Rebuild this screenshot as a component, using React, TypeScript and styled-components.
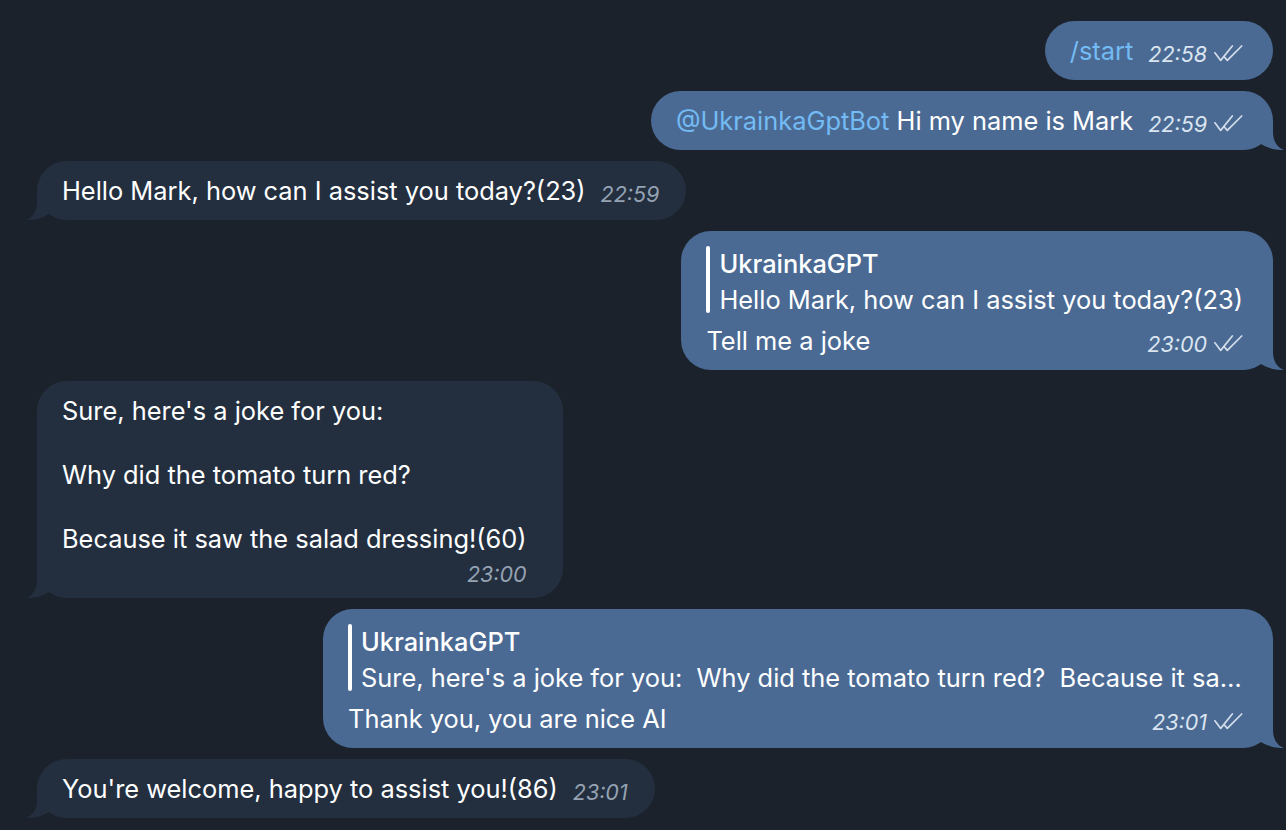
import React from "react";
import styled, { createGlobalStyle } from "styled-components";

const OUT_BG = "#4a6a94";
const IN_BG = "#232f3f";

const GlobalStyle = createGlobalStyle`
  html, body { margin: 0; padding: 0; background: #1b222c; }
  body { font-family: Inter, "Noto Sans", sans-serif; -webkit-font-smoothing: antialiased; }
`;

const Chat = styled.main`
  box-sizing: border-box;
  width: 1286px;
  height: 830px;
  overflow: hidden;
  display: flex;
  flex-direction: column;
  gap: 11px;
  padding: 21px 13px 0 37px;
  background: #1b222c;
`;

const Bubble = styled.div<{ $out?: boolean; $extra?: number }>`
  position: relative;
  box-sizing: border-box;
  align-self: ${(p) => (p.$out ? "flex-end" : "flex-start")};
  max-width: 950px;
  min-width: 0;
  background: ${(p) => (p.$out ? OUT_BG : IN_BG)};
  color: #ffffff;
  border-radius: 30px;
  padding: 14px ${(p) => (p.$out ? 30 : 27) + (p.$extra ?? 0)}px 13px 25px;
  font-size: 25.4px;
  line-height: 32px;
`;

const TailSvg = styled.svg<{ $out?: boolean }>`
  position: absolute;
  bottom: 0;
  width: 30px;
  height: 30px;
  ${(p) => (p.$out ? "right: -11px; transform: scaleX(-1);" : "left: -11px;")}
`;

const Tail: React.FC<{ out?: boolean }> = ({ out }) => (
  <TailSvg $out={out} viewBox="0 0 30 30" aria-hidden>
    <path
      d="M11 0 L11 12 C11 22 6 28 0 30 C8 30.2 15 29 24 23.6 L24 0 Z"
      fill={out ? OUT_BG : IN_BG}
    />
  </TailSvg>
);

const Row = styled.div`
  display: flex;
  align-items: baseline;
  justify-content: space-between;
  gap: 15px;
`;

const Text = styled.span`
  white-space: pre-wrap;
`;

const Link = styled.span`
  color: #74bbf4;
`;

const Meta = styled.span<{ $out?: boolean }>`
  display: inline-flex;
  align-items: baseline;
  gap: 7px;
  flex: none;
  font-size: 21.5px;
  line-height: 26px;
  font-style: italic;
  white-space: nowrap;
  transform: translateY(2px);
  color: ${(p) => (p.$out ? "#dbe5f0" : "#95a2b2")};
`;

const MetaBlock = styled.div`
  display: flex;
  justify-content: flex-end;
  margin-top: 4px;
`;

const ChecksSvg = styled.svg`
  width: 29px;
  height: 18px;
  margin-bottom: -2px;
`;

const Checks = () => (
  <ChecksSvg viewBox="0 0 29 18" aria-hidden>
    <g fill="none" stroke="#d3deea" strokeWidth="1.7" strokeLinecap="round" strokeLinejoin="round">
      <path d="M0.9 8.8 L6.7 16.4 L18.3 2" />
      <path d="M10.4 13 L13.3 16.4 L27.7 2" />
    </g>
  </ChecksSvg>
);

const Reply = styled.div`
  position: relative;
  min-width: 0;
  margin: 1px 0 7px 0;
  padding-left: 13px;
  line-height: 36px;
  &::before {
    content: "";
    position: absolute;
    left: 0;
    top: 0;
    bottom: 5px;
    width: 4px;
    border-radius: 2px;
    background: #ffffff;
  }
`;

const ReplyName = styled.div`
  font-weight: 500;
`;

const ReplyText = styled.div`
  white-space: nowrap;
  overflow: hidden;
  text-overflow: ellipsis;
`;

const Time: React.FC<{ t: string; out?: boolean }> = ({ t, out }) => (
  <Meta $out={out}>
    {t}
    {out && <Checks />}
  </Meta>
);

export default function App() {
  return (
    <>
      <GlobalStyle />
      <Chat>
        <Bubble $out>
          <Row>
            <Text>
              <Link>/start</Link>
            </Text>
            <Time t="22:58" out />
          </Row>
        </Bubble>

        <Bubble $out>
          <Row>
            <Text>
              <Link>@UkrainkaGptBot</Link> Hi my name is Mark
            </Text>
            <Time t="22:59" out />
          </Row>
          <Tail out />
        </Bubble>

        <Bubble>
          <Row>
            <Text>Hello Mark, how can I assist you today?(23)</Text>
            <Time t="22:59" />
          </Row>
          <Tail />
        </Bubble>

        <Bubble $out>
          <Reply>
            <ReplyName>UkrainkaGPT</ReplyName>
            <ReplyText>Hello Mark, how can I assist you today?(23)</ReplyText>
          </Reply>
          <Row>
            <Text>Tell me a joke</Text>
            <Time t="23:00" out />
          </Row>
          <Tail out />
        </Bubble>

        <Bubble $extra={9}>
          <Text>
            {"Sure, here's a joke for you:\n\nWhy did the tomato turn red?\n\nBecause it saw the salad dressing!(60)"}
          </Text>
          <MetaBlock>
            <Time t="23:00" />
          </MetaBlock>
          <Tail />
        </Bubble>

        <Bubble $out>
          <Reply>
            <ReplyName>UkrainkaGPT</ReplyName>
            <ReplyText>
              Sure, here's a joke for you:&nbsp; Why did the tomato turn red?&nbsp; Because it saw the salad dressing!(60)
            </ReplyText>
          </Reply>
          <Row>
            <Text>Thank you, you are nice AI</Text>
            <Time t="23:01" out />
          </Row>
          <Tail out />
        </Bubble>

        <Bubble>
          <Row>
            <Text>You're welcome, happy to assist you!(86)</Text>
            <Time t="23:01" />
          </Row>
          <Tail />
        </Bubble>
      </Chat>
    </>
  );
}
